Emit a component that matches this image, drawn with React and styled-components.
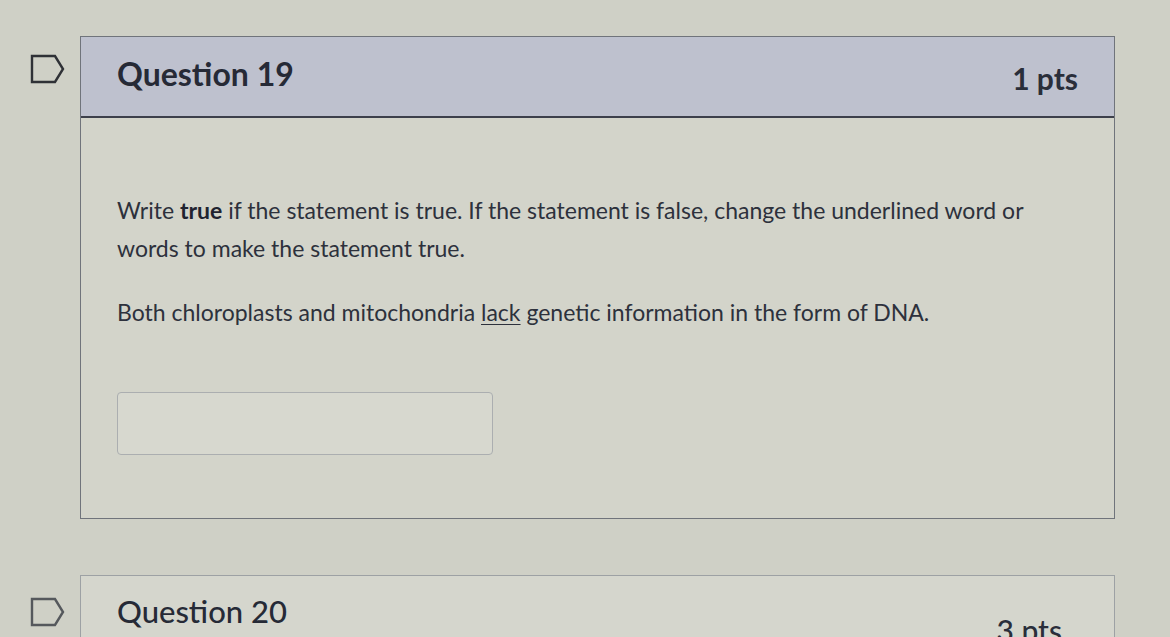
import styled, { createGlobalStyle } from "styled-components";

const GlobalStyle = createGlobalStyle`
  html, body {
    margin: 0;
    padding: 0;
    background: #cfd0c6;
    font-family: Lato, "Open Sans", sans-serif;
    color: #2b303b;
  }
`;

const Page = styled.div`
  display: flex;
  flex-direction: column;
  gap: 56px;
  padding: 36px 55px 0 0;
  height: 637px;
  box-sizing: border-box;
  overflow: hidden;
`;

const QuestionRow = styled.div`
  display: grid;
  grid-template-columns: 80px 1fr;
`;

const FlagCell = styled.div`
  display: flex;
  justify-content: flex-end;
  padding: ${(p) => (p.$faded ? "22px" : "18px")} 14px 0 0;
`;

const Card = styled.section`
  border: 1px solid ${(p) => (p.$faded ? "#9da1a4" : "#70747b")};
  background: #d3d4ca;
  box-sizing: border-box;
`;

const Header = styled.header`
  display: flex;
  align-items: center;
  justify-content: space-between;
  height: ${(p) => (p.$faded ? "80px" : "79px")};
  padding: 0 36px;
  background: ${(p) => (p.$faded ? "#d5d6cd" : "#bec1ce")};
  border-bottom: 2px solid ${(p) => (p.$faded ? "transparent" : "#3d404b")};
`;

const Title = styled.h2`
  margin: 0 0 ${(p) => (p.$faded ? "10px" : "6px")};
  font-size: ${(p) => (p.$faded ? "31px" : "32px")};
  font-weight: ${(p) => (p.$faded ? 500 : 700)};
  color: #262a36;
`;

const Points = styled.span`
  font-size: 30px;
  font-weight: ${(p) => (p.$faded ? 500 : 700)};
  color: #2a2e3a;
  margin: ${(p) => (p.$faded ? "28px 16px 0 0" : "2px 0 0")};
`;

const Body = styled.div`
  padding: 73px 36px 63px;
`;

const Text = styled.p`
  margin: 0 0 26px;
  max-width: 930px;
  font-size: 23px;
  line-height: 38px;
  color: #2d313c;

  strong {
    font-weight: 700;
    color: #1f2330;
  }

  u {
    text-decoration-thickness: 1px;
    text-underline-offset: 3px;
  }
`;

const AnswerInput = styled.input`
  display: block;
  margin-top: 61px;
  width: 376px;
  height: 63px;
  box-sizing: border-box;
  border: 1px solid #abaeb0;
  border-radius: 4px;
  background: #d7d8cf;
  font: inherit;
  font-size: 20px;
  padding: 0 12px;
`;

function Flag({ faded }) {
  return (
    <svg width="36" height="30" viewBox="0 0 36 30" fill="none">
      <path
        d="M2 2 H25 L33 15 L25 28 H2 Z"
        stroke={faded ? "#55585c" : "#2f3136"}
        strokeWidth="2.4"
        strokeLinejoin="miter"
      />
    </svg>
  );
}

export default function App() {
  return (
    <>
      <GlobalStyle />
      <Page>
        <QuestionRow>
          <FlagCell>
            <Flag />
          </FlagCell>
          <Card>
            <Header>
              <Title>Question 19</Title>
              <Points>1 pts</Points>
            </Header>
            <Body>
              <Text>
                Write <strong>true</strong> if the statement is true. If the
                statement is false, change the underlined word or words to make
                the statement true.
              </Text>
              <Text>
                Both chloroplasts and mitochondria <u>lack</u> genetic
                information in the form of DNA.
              </Text>
              <AnswerInput type="text" aria-label="Answer" />
            </Body>
          </Card>
        </QuestionRow>

        <QuestionRow>
          <FlagCell $faded>
            <Flag faded />
          </FlagCell>
          <Card $faded>
            <Header $faded>
              <Title $faded>Question 20</Title>
              <Points $faded>3 pts</Points>
            </Header>
          </Card>
        </QuestionRow>
      </Page>
    </>
  );
}
